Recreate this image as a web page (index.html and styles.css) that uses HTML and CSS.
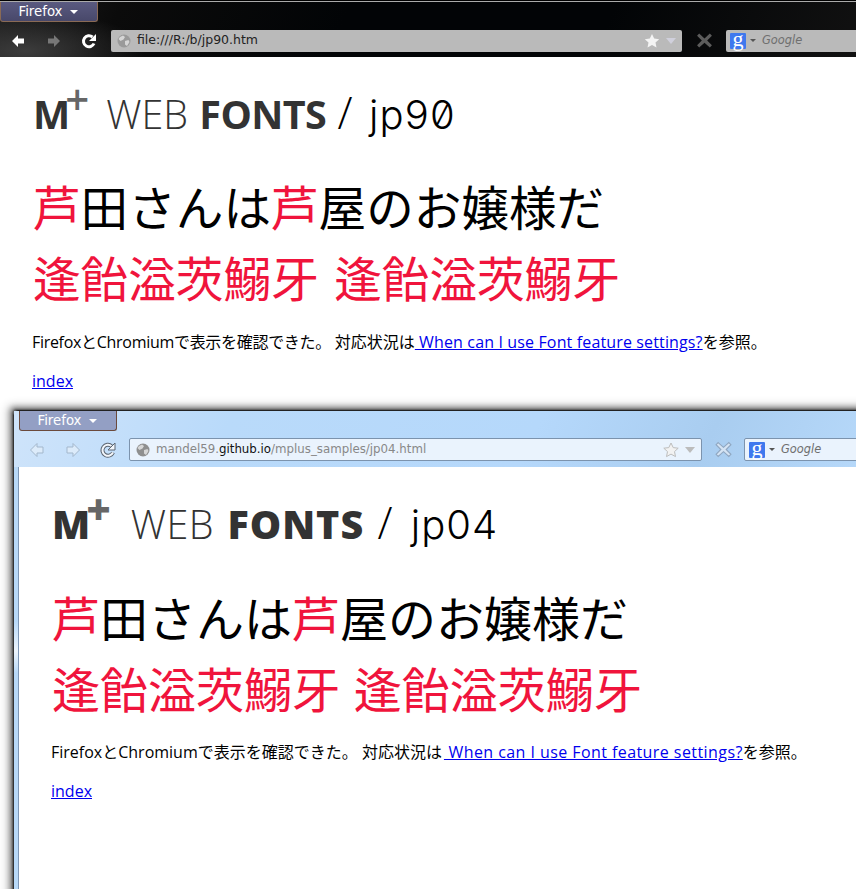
FILE: index.html
```html
<!DOCTYPE html>
<html lang="ja">
<head>
<meta charset="utf-8">
<title>M+ Web Fonts</title>
<link rel="stylesheet" href="styles.css">
</head>
<body>
<div class="desktop">
  <section class="window window-dark">
    <div class="chrome">
      <div class="tabbar"><div class="appmenu">Firefox<span class="caret"></span></div></div>
      <div class="navbar">
        <svg class="nav-icon nav-back" viewBox="0 0 16 16"><path d="M8 2 2 8l6 6v-3.500h6v-5H8z"/></svg>
        <svg class="nav-icon nav-fwd" viewBox="0 0 16 16"><path d="M8 2l6 6-6 6v-3.500H2v-5h6z"/></svg>
        <svg class="nav-icon nav-reload" viewBox="0 0 16 16"><path class="ring-under" d="M13 10.500a5.500 5.500 0 1 1-1.500-6.500"/><path class="ring" d="M13 10.500a5.500 5.500 0 1 1-1.500-6.500"/><path class="tip" d="M15 1v7H8z"/></svg>
        <div class="urlbar">
          <svg class="globe" viewBox="0 0 14 14"><circle cx="7" cy="7" r="6.500"/><path class="land" d="M3 3l3-1.500 2 1.500-1.500 2.500L3.500 7 1.500 5zM8 7l3.500-1 1 2-2.500 4-2-1.500z"/></svg>
          <span class="url">file:///R:/b/jp90.htm</span>
          <svg class="star" viewBox="0 0 16 16"><path d="M8 1l2.200 4.600 5 .6-3.700 3.400 1 5L8 12.100 3.500 14.600l1-5L.8 6.200l5-.6z"/></svg>
          <span class="url-drop"></span>
        </div>
        <svg class="stop" viewBox="0 0 16 16"><path d="M3 1.500 8 6l5-4.500 2 2L10.500 8l4.500 4.500-2 2L8 10l-5 4.500-2-2L5.500 8 1 3.500z"/></svg>
        <div class="searchbar">
          <span class="g-logo">g</span><span class="search-caret"></span><span class="search-label">Google</span>
        </div>
      </div>
    </div>
    <div class="page">
      <h1 class="title"><span class="logo"><span class="logo-m">M</span><span class="plus">+</span></span><span class="light">WEB</span> <b>FONTS</b> <span class="suffix"><span class="slash">/</span> jp90</span></h1>
      <p class="jp-one"><span class="red">芦</span>田さんは<span class="red">芦</span>屋のお嬢様だ</p>
      <p class="jp-two">逢飴溢茨鰯牙 逢飴溢茨鰯牙</p>
      <p class="body-text"><span class="lead">FirefoxとChromiumで表示を確認できた。 </span>対応状況は<a class="inline-link" href="#"> When can I use Font feature settings?</a>を参照。</p>
      <p class="body-text"><a href="#">index</a></p>
    </div>
  </section>

  <section class="window window-light">
    <div class="chrome">
      <div class="tabbar"><div class="appmenu">Firefox<span class="caret"></span></div></div>
      <div class="navbar">
        <svg class="nav-icon nav-back" viewBox="0 0 16 16"><path d="M8 1.500 1.500 8 8 14.500V11h6V5H8z"/></svg>
        <svg class="nav-icon nav-fwd" viewBox="0 0 16 16"><path d="M8 1.500 14.500 8 8 14.500V11H2V5h6z"/></svg>
        <svg class="nav-icon nav-reload" viewBox="0 0 16 16"><path class="ring-under" d="M13 10.500a5.500 5.500 0 1 1-1.500-6.500"/><path class="ring" d="M13 10.500a5.500 5.500 0 1 1-1.500-6.500"/><path class="tip" d="M15 1v7H8z"/></svg>
        <div class="urlbar">
          <svg class="globe" viewBox="0 0 14 14"><circle cx="7" cy="7" r="6.500"/><path class="land" d="M3 3l3-1.500 2 1.500-1.500 2.500L3.500 7 1.500 5zM8 7l3.500-1 1 2-2.500 4-2-1.500z"/></svg>
          <span class="url">mandel59.<em>github.io</em>/mplus_samples/jp04.html</span>
          <svg class="star" viewBox="0 0 16 16"><path d="M8 1l2.200 4.600 5 .6-3.700 3.400 1 5L8 12.100 3.500 14.600l1-5L.8 6.200l5-.6z"/></svg>
          <span class="url-drop"></span>
        </div>
        <svg class="stop" viewBox="0 0 16 16"><path d="M3 1.500 8 6l5-4.500 2 2L10.500 8l4.500 4.500-2 2L8 10l-5 4.500-2-2L5.500 8 1 3.500z"/></svg>
        <div class="searchbar">
          <span class="g-logo">g</span><span class="search-caret"></span><span class="search-label">Google</span>
        </div>
      </div>
    </div>
    <div class="page">
      <h1 class="title"><span class="logo"><span class="logo-m">M</span><span class="plus">+</span></span><span class="light">WEB</span> <b>FONTS</b> <span class="suffix"><span class="slash">/</span> jp04</span></h1>
      <p class="jp-one"><span class="red">芦</span>田さんは<span class="red">芦</span>屋のお嬢様だ</p>
      <p class="jp-two">逢飴溢茨鰯牙 逢飴溢茨鰯牙</p>
      <p class="body-text"><span class="lead">FirefoxとChromiumで表示を確認できた。 </span>対応状況は<a class="inline-link" href="#"> When can I use Font feature settings?</a>を参照。</p>
      <p class="body-text"><a href="#">index</a></p>
    </div>
  </section>
</div>
</body>
</html>
```
FILE: styles.css
```css
* { box-sizing: border-box; }
html, body { margin: 0; padding: 0; height: 100%; }
body { background: #fff; overflow: hidden; font-family: "Open Sans", "Noto Sans CJK JP", sans-serif; }
.desktop { position: relative; width: 856px; height: 889px; overflow: hidden; background: #fff; }

.window { position: absolute; display: flex; flex-direction: column; }
.window-dark { left: 0; top: 0; width: 856px; height: 410px; }
.window-light {
  left: 13px; top: 410px; width: 860px; height: 500px;
  border-top: 1px solid #222; border-left: 1px solid #333;
  border-top-left-radius: 5px;
  box-shadow: -1px -1px 2px #555, -3px -3px 5px #888, -6px -5px 8px #ccc;
  background: linear-gradient(#b8d9f8 0, #b8d9f8 210px, #eef5fc 240px, #b8d9f8 262px);
  padding-left: 4px;
}

.chrome { flex: none; display: flex; flex-direction: column; }
.window-dark .chrome {
  height: 57px;
  border-top: 1px solid #000;
  background:
    radial-gradient(ellipse 120px 40px at 25px 50px, #3c3c3c 0, rgba(40,40,40,0) 100%),
    linear-gradient(115deg, #1c1c1c 0, #0b0b0b 14%, #020406 40%, #020406 70%, #111 100%);
}
.window-dark .chrome::before { content: ""; display: block; height: 1px; background: #aaa; flex: none; }
.window-light .chrome {
  height: 56px; margin-left: -4px;
  background: linear-gradient(115deg, #cfe4fa 0, #b9dafa 25%, #b5d8fb 60%, #a9cdf0 80%, #b7d9fa 100%);
}

.tabbar { height: 27px; flex: none; }
.window-dark .tabbar { height: 26px; }
.appmenu {
  width: 98px; height: 20px; display: flex; align-items: center; justify-content: center; gap: 7px;
  font: 13.300px/1 "DejaVu Sans", sans-serif; color: #fff;
  border: 1px solid #8a6a55; border-top: 0; border-radius: 0 0 3px 3px;
  padding-right: 2px;
}
.window-dark .appmenu { background: linear-gradient(#5a5a80, #48486a); }
.window-light .appmenu { width: 98px; margin-left: 5px; background: #939fc4; border-color: #6b4a3c; }
.caret { width: 0; height: 0; border: 4px solid transparent; border-top: 4px solid #fff; border-bottom: 0; }

.navbar { display: flex; align-items: center; height: 23px; flex: none; }
.window-dark .navbar { padding-left: 10px; margin-top: 1px; }
.window-light .navbar { padding-left: 15px; }

.nav-icon { width: 16px; height: 16px; flex: none; }
.nav-fwd { margin-left: 20px; }
.nav-reload { margin-left: 19px; }
.window-dark .nav-back { fill: #fff; }
.window-dark .nav-fwd { fill: #777; }
.window-dark .ring-under { display: none; }
.window-dark .ring { fill: none; stroke: #fff; stroke-width: 3; }
.window-dark .tip { fill: #fff; }
.window-light .nav-back, .window-light .nav-fwd { fill: #dcebfa; stroke: #a3b7cc; stroke-width: 1; }
.window-light .ring-under { fill: none; stroke: #5a6470; stroke-width: 4; }
.window-light .ring { fill: none; stroke: #f2f6fb; stroke-width: 2; }
.window-light .tip { fill: #f2f6fb; stroke: #5a6470; stroke-width: 1; }

.urlbar { display: flex; align-items: center; height: 22px; flex: none; padding-left: 6px; border-radius: 2px; }
.window-dark .urlbar { width: 571px; margin-left: 14px; background: #bababa; }
.window-light .urlbar { width: 573px; margin-left: 13px; height: 23px; background: #eaf3fd; border: 1px solid #7c93ad; }
.globe { width: 14px; height: 14px; flex: none; }
.globe circle { fill: #8f8f8f; }
.globe .land { fill: #d6d6d6; }
.window-dark .globe circle { fill: #9a9a9a; }
.url { margin-left: 6px; font: 12.500px/1 "DejaVu Sans", sans-serif; color: #222; flex: 1; white-space: nowrap; }
.window-light .url { color: #888; font-size: 11.800px; }
.url em { font-style: normal; color: #111; }
.star { width: 16px; height: 16px; flex: none; }
.window-dark .star { fill: #f4f4f4; }
.window-light .star { fill: #f2f2f2; stroke: #bdbdbd; stroke-width: 1; }
.url-drop { width: 0; height: 0; margin: 0 6px 0 6px; border: 5px solid transparent; border-top: 6px solid #d0d0dc; border-bottom: 0; flex: none; }
.window-light .url-drop { border-top-color: #bcbcbc; }

.stop { width: 17px; height: 17px; flex: none; margin-left: 14px; }
.window-dark .stop { fill: #5c5c5c; }
.window-light .stop { fill: #d4e3f3; stroke: #8fa6c0; stroke-width: 1; margin-left: 13px; }

.searchbar { display: flex; align-items: center; height: 22px; width: 140px; flex: none; margin-left: 13px; padding-left: 4px; border-radius: 2px; }
.window-dark .searchbar { background: #bababa; }
.window-light .searchbar { height: 23px; margin-left: 12px; background: #eaf3fd; border: 1px solid #7c93ad; }
.g-logo {
  width: 16px; height: 16px; background: #3f78ee; color: #fff; flex: none;
  font: 22px/12px "Liberation Serif", serif; text-align: center; border-radius: 1px;
}
.search-caret { width: 0; height: 0; margin-left: 4px; border: 3px solid transparent; border-top: 3px solid #555; border-bottom: 0; flex: none; }
.search-label { margin-left: 6px; font: italic 11.400px/1 "DejaVu Sans", sans-serif; color: #6f6f6f; }

.page { flex: 1; background: #fff; padding: 21px 0 0 33px; white-space: nowrap; }
.window-light .page { border-left: 1px solid #7d96b5; padding-left: 33px; }

.title { margin: 0; font-size: 39.500px; line-height: 60px; color: #333; font-weight: 400; word-spacing: 1px; }
.window-light .title { word-spacing: 3px; }
.logo { font-weight: 700; display: inline-block; margin-right: 18px; }
.logo-m { letter-spacing: -5px; }
.plus { display: inline-block; font-weight: 600; color: #666; font-size: 42px; line-height: 1; vertical-align: 14px; letter-spacing: -1px; }
.light { font-weight: 300; }
.title b { font-weight: 700; letter-spacing: -0.600px; }
.suffix { font-family: "Inter", sans-serif; font-weight: 300; color: #000; font-size: 40px; font-feature-settings: "zero" 1; letter-spacing: 1.200px; }
.slash { font-family: "Open Sans", sans-serif; font-size: 44px; letter-spacing: 0; margin-right: 3px; }
.window-light .plus { font-weight: 800; }
.window-light .logo-m { letter-spacing: -4px; }
.window-light .title b, .window-light .logo { font-weight: 800; }
.window-light .title b { letter-spacing: 1px; }
.window-light .light { letter-spacing: 0.500px; margin-left: 3px; }
.window-light .suffix { font-feature-settings: normal; letter-spacing: 1px; }

.jp-one, .jp-two { margin: 0; font-family: "Noto Sans CJK JP", sans-serif; font-size: 47.600px; font-weight: 400; color: #000; }
.window-light .jp-one, .window-light .jp-two { font-size: 48px; }
.jp-one { margin-top: 26px; line-height: 70px; }
.jp-two { margin-top: 1px; line-height: 70px; color: #f0143c; word-spacing: 5px; }
.window-light .jp-two { word-spacing: 3px; }
.red { color: #f0143c; }
.body-text { margin: 0 0 0 -1px; font-size: 16px; line-height: 22px; color: #000; font-family: "Open Sans", "Noto Sans CJK JP", sans-serif; }
.jp-two + .body-text { margin-top: 19px; }
.body-text + .body-text { margin-top: 17px; }
.body-text a { color: #00e; }
.window-dark .lead { letter-spacing: -0.300px; }
.window-dark .inline-link { letter-spacing: 0.140px; }
.window-light .inline-link { letter-spacing: 0.430px; margin-left: 2px; }
```
